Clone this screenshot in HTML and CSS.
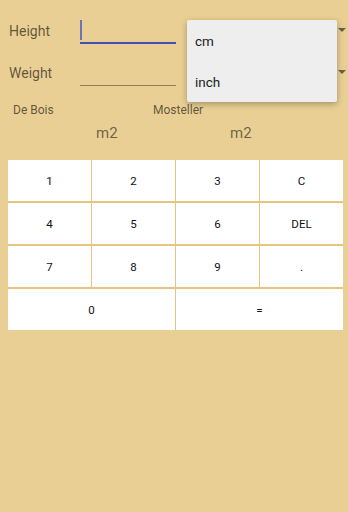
FILE: index.html
```html
<!DOCTYPE html>
<html>
<head>
<meta charset="utf-8">
<link rel="stylesheet" href="styles.css">
</head>
<body>
<div class="app">
  <div class="form">
    <div class="row">
      <div class="label">Height</div>
      <div class="field field-active"><span class="cursor"></span></div>
      <div class="spinner"><span class="arrow"></span></div>
    </div>
    <div class="row">
      <div class="label">Weight</div>
      <div class="field"></div>
      <div class="spinner"><span class="arrow"></span></div>
    </div>
    <div class="popup">
      <div class="item">cm</div>
      <div class="item">inch</div>
    </div>
  </div>
  <div class="names">
    <span>De Bois</span>
    <span>Mosteller</span>
  </div>
  <div class="units">
    <span>m2</span>
    <span>m2</span>
  </div>
  <div class="keypad">
    <div class="key">1</div>
    <div class="key">2</div>
    <div class="key">3</div>
    <div class="key">C</div>
    <div class="key">4</div>
    <div class="key">5</div>
    <div class="key">6</div>
    <div class="key">DEL</div>
    <div class="key">7</div>
    <div class="key">8</div>
    <div class="key">9</div>
    <div class="key">.</div>
    <div class="key wide">0</div>
    <div class="key wide">=</div>
  </div>
</div>
</body>
</html>
```

FILE: styles.css
```css
html, body {
  margin: 0;
  padding: 0;
}
body {
  background: #e9cf94;
  font-family: Roboto, "Noto Sans", sans-serif;
  width: 348px;
  height: 512px;
  overflow: hidden;
}
.app {
  display: flex;
  flex-direction: column;
}
.form {
  position: relative;
  padding-top: 10px;
}
.row {
  display: grid;
  grid-template-columns: 80px 96px 1fr;
  height: 42px;
  align-items: center;
}
.label {
  padding-left: 9px;
  font-size: 14px;
  color: rgba(0, 0, 0, 0.6);
}
.field {
  align-self: start;
  height: 32px;
  box-sizing: border-box;
  border-bottom: 1px solid #8c7d5c;
  margin-top: 2px;
  position: relative;
}
.field-active {
  border-bottom: 2px solid #3f51b5;
}
.cursor {
  position: absolute;
  left: 0;
  top: 8px;
  width: 2px;
  height: 20px;
  background: #6a74b9;
}
.spinner {
  display: flex;
  justify-content: flex-end;
  align-items: center;
  height: 100%;
  padding-right: 2px;
}
.arrow {
  width: 0;
  height: 0;
  border-left: 4px solid transparent;
  border-right: 4px solid transparent;
  border-top: 4px solid #6b5e45;
  margin-bottom: 3px;
}
.popup {
  position: absolute;
  left: 187px;
  top: 20px;
  width: 150px;
  height: 82px;
  background: #eeeeee;
  border-radius: 2px;
  box-shadow: 0 2px 6px rgba(0, 0, 0, 0.3);
  display: flex;
  flex-direction: column;
}
.item {
  flex: 1;
  display: flex;
  align-items: center;
  padding-left: 8px;
  font-size: 13.5px;
  color: #212121;
}
.names {
  display: grid;
  grid-template-columns: 140px auto;
  padding-left: 13px;
  margin-top: 9px;
  font-size: 12px;
  line-height: 14px;
  color: rgba(0, 0, 0, 0.6);
}
.units {
  display: grid;
  grid-template-columns: 134px auto;
  padding-left: 96px;
  margin-top: 7px;
  font-size: 15px;
  line-height: 18px;
  color: rgba(0, 0, 0, 0.55);
}
.keypad {
  margin: 18px 5px 0 8px;
  display: grid;
  grid-template-columns: repeat(4, 83px);
  grid-auto-rows: 41px;
  column-gap: 1px;
  row-gap: 2px;
  background: #e6c57f;
  width: 335px;
}
.key {
  background: #ffffff;
  display: flex;
  align-items: center;
  justify-content: center;
  font-size: 11.5px;
  color: #111111;
}
.wide {
  grid-column: span 2;
}
```
